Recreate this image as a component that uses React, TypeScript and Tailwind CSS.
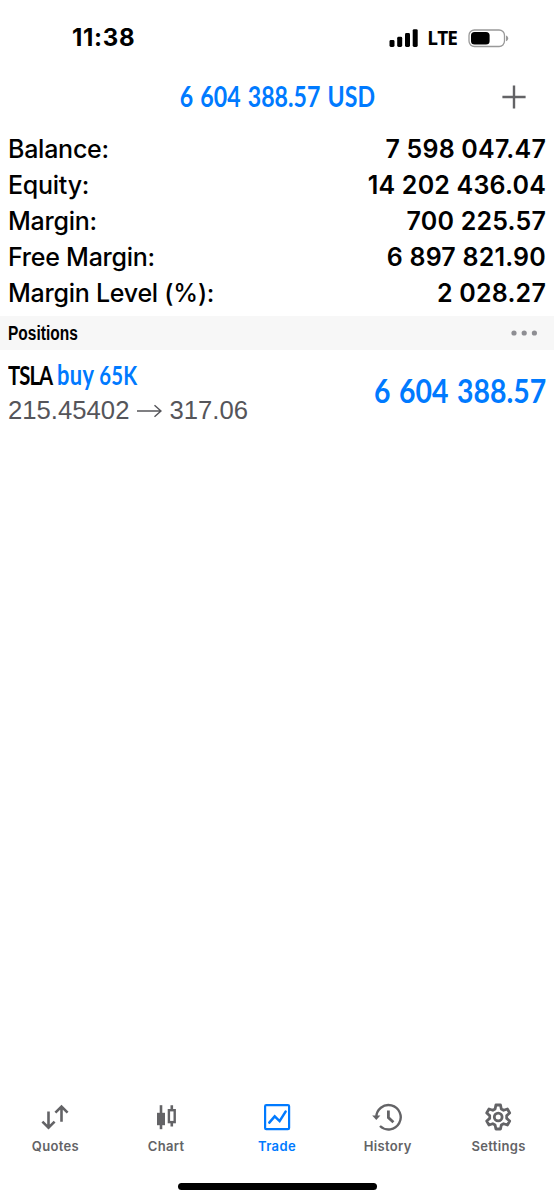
import type { ReactNode } from "react";

const stats = [
  { label: "Balance:", value: "7 598 047.47" },
  { label: "Equity:", value: "14 202 436.04" },
  { label: "Margin:", value: "700 225.57" },
  { label: "Free Margin:", value: "6 897 821.90" },
  { label: "Margin Level (%):", value: "2 028.27" },
];

function SignalIcon() {
  return (
    <svg width="29" height="18" viewBox="0 0 29 18" fill="black">
      <rect x="0.5" y="11" width="5" height="7" rx="1.4" />
      <rect x="8.2" y="7.8" width="5" height="10.2" rx="1.4" />
      <rect x="16" y="4" width="5" height="14" rx="1.4" />
      <rect x="23.7" y="0.2" width="5" height="17.8" rx="1.4" />
    </svg>
  );
}

function BatteryIcon() {
  return (
    <svg width="41" height="19" viewBox="0 0 41 19">
      <rect x="1" y="1" width="35.5" height="16.5" rx="5.4" fill="none" stroke="#999" strokeWidth="1.3" />
      <rect x="3" y="3" width="18.6" height="12.6" rx="3.6" fill="black" />
      <path d="M38 6.4c1.6.5 2.2 1.6 2.2 2.9S39.6 11.7 38 12.2z" fill="#999" />
    </svg>
  );
}

function QuotesIcon() {
  return (
    <svg width="30" height="30" viewBox="0 0 30 30" fill="none" stroke="currentColor" strokeWidth="2.6">
      <path d="M8.5 9.5V26M2.4 19.6l6.1 6.1 6.1-6.1" />
      <path d="M21.5 19.7V4M15.4 10.7l6.1-6.1 6.1 6.1" />
    </svg>
  );
}

function ChartIcon() {
  return (
    <svg className="-ml-px" width="30" height="30" viewBox="0 0 30 30" fill="none" stroke="currentColor">
      <path d="M10 3.2v24" strokeWidth="2.6" />
      <rect x="6" y="10.8" width="8" height="12.4" fill="currentColor" stroke="none" />
      <path d="M20.8 3.2v5M20.8 20.4v4.1" strokeWidth="2.6" />
      <rect x="17.9" y="8.2" width="5.8" height="11.9" strokeWidth="2.4" />
    </svg>
  );
}

function TradeIcon() {
  return (
    <svg width="30" height="30" viewBox="0 0 30 30" fill="none" stroke="currentColor">
      <rect x="3.1" y="3.1" width="24" height="24" rx="1.2" strokeWidth="2.2" />
      <path d="M7.3 20.6l5.4-6.2 4.9 4.7 6-9.5" strokeWidth="2.5" strokeLinecap="round" />
    </svg>
  );
}

function HistoryIcon() {
  return (
    <svg className="-ml-px" width="30" height="30" viewBox="0 0 30 30" fill="none" stroke="currentColor" strokeWidth="2.4">
      <path d="M4.3 15.5A12.200 12.200 0 1 1 8 24" />
      <path d="M0.2 13.5h8.200L4.300 18z" fill="currentColor" stroke="none" />
      <path d="M16.400 8.400v7.200l5 4.700" strokeWidth="2.800" />
    </svg>
  );
}

function SettingsIcon() {
  return (
    <svg className="-ml-px" width="30" height="30" viewBox="0 0 30 30" fill="none" stroke="currentColor" strokeWidth="2.8" strokeLinejoin="round">
      <path d="M12.9 3h4.600l.8 4 2.300 1.300 3.800-1.300 2.300 4-3 2.600v2.800l3 2.600-2.300 4-3.800-1.300-2.300 1.300-.8 4h-4.600l-.8-4-2.300-1.300L6 23l-2.300-4 3-2.600v-2.800l-3-2.600 2.300-4 3.800 1.300 2.300-1.300z" />
      <circle cx="15.200" cy="15" r="3.900" />
    </svg>
  );
}

function Tab({ label, active, children }: { label: string; active?: boolean; children: ReactNode }) {
  return (
    <div className={`flex flex-1 flex-col items-center ${active ? "text-[#007aff]" : "text-[#636366]"}`}>
      {children}
      <span className="mt-1 text-[13px] leading-5 font-semibold tracking-[0.35px]">{label}</span>
    </div>
  );
}

export default function App() {
  return (
    <div className="flex h-[1200px] w-[554px] flex-col bg-white font-['Inter','Liberation_Sans',sans-serif] text-black">
      <div className="flex h-[76px] items-center justify-between pr-[45px] pl-[72px]">
        <span className="text-[24px] font-bold tracking-[0.7px]">11:38</span>
        <div className="flex items-center">
          <SignalIcon />
          <span className="mr-[11px] ml-[9px] font-['Open_Sans',sans-serif] text-[19px] font-bold tracking-[-0.9px]">LTE</span>
          <BatteryIcon />
        </div>
      </div>

      <header className="grid h-[55px] grid-cols-[1fr_auto_1fr] items-center">
        <h1 className="col-start-2 -mt-4 origin-center scale-x-[0.825] text-center font-['Lato',sans-serif] text-[28px] font-bold whitespace-nowrap text-[#007aff] [word-spacing:2px]">
          6 604 388.57 USD
        </h1>
        <svg className="-mt-[14px] mr-[28px] justify-self-end" width="24" height="24" viewBox="0 0 24 24" stroke="#636366" strokeWidth="2.4">
          <path d="M12 .4v23.200M.4 12h23.200" />
        </svg>
      </header>

      <dl className="h-[185px] px-2 pt-px">
        {stats.map((s) => (
          <div key={s.label} className="flex h-9 items-center justify-between text-[25px] whitespace-nowrap">
            <dt className="font-medium tracking-[-0.25px]">{s.label}</dt>
            <dd className="font-semibold tracking-[0.2px]">{s.value}</dd>
          </div>
        ))}
      </dl>

      <div className="flex h-[34px] items-center justify-between bg-[#f7f7f7] pr-4 pl-2">
        <h2 className="origin-left scale-x-[0.775] font-['Liberation_Sans',sans-serif] text-[20px] font-bold">Positions</h2>
        <svg width="27" height="6" viewBox="0 0 27 6" fill="#8e8e93">
          <circle cx="3" cy="3" r="2.6" />
          <circle cx="13.2" cy="3" r="2.6" />
          <circle cx="23.4" cy="3" r="2.6" />
        </svg>
      </div>

      <div className="flex h-[82px] items-center justify-between px-2">
        <div className="pt-[3px]">
          <p className="h-9 origin-left scale-x-[0.78] font-['Lato',sans-serif] text-[26px] leading-9 font-bold whitespace-nowrap">
            <span className="tracking-[-1.2px]">TSLA</span>{" "}
            <span className="text-[#007aff]">
              <span className="text-[28px] leading-none tracking-[0.4px]">buy</span> <span className="tracking-[0.4px]">65K</span>
            </span>
          </p>
          <p className="flex h-9 items-center font-['Liberation_Sans',sans-serif] text-[25.7px] text-[#55555a]">
            215.45402
            <svg className="mx-[7px]" width="26" height="16" viewBox="0 0 26 16" fill="none" stroke="currentColor" strokeWidth="1.5">
              <path d="M1 8h24M18.500 2.200L25 8l-6.500 5.800" />
            </svg>
            317.06
          </p>
        </div>
        <span className="origin-right scale-x-[0.86] font-['Lato',sans-serif] text-[33px] font-bold whitespace-nowrap text-[#007aff] [word-spacing:2px]">
          6 604 388.57
        </span>
      </div>

      <nav className="mt-auto flex h-[81px]">
        <Tab label="Quotes">
          <QuotesIcon />
        </Tab>
        <Tab label="Chart">
          <ChartIcon />
        </Tab>
        <Tab label="Trade" active>
          <TradeIcon />
        </Tab>
        <Tab label="History">
          <HistoryIcon />
        </Tab>
        <Tab label="Settings">
          <SettingsIcon />
        </Tab>
      </nav>
      <div className="mb-[10px] h-[7px] w-[199px] self-center rounded-full bg-black" />
    </div>
  );
}
